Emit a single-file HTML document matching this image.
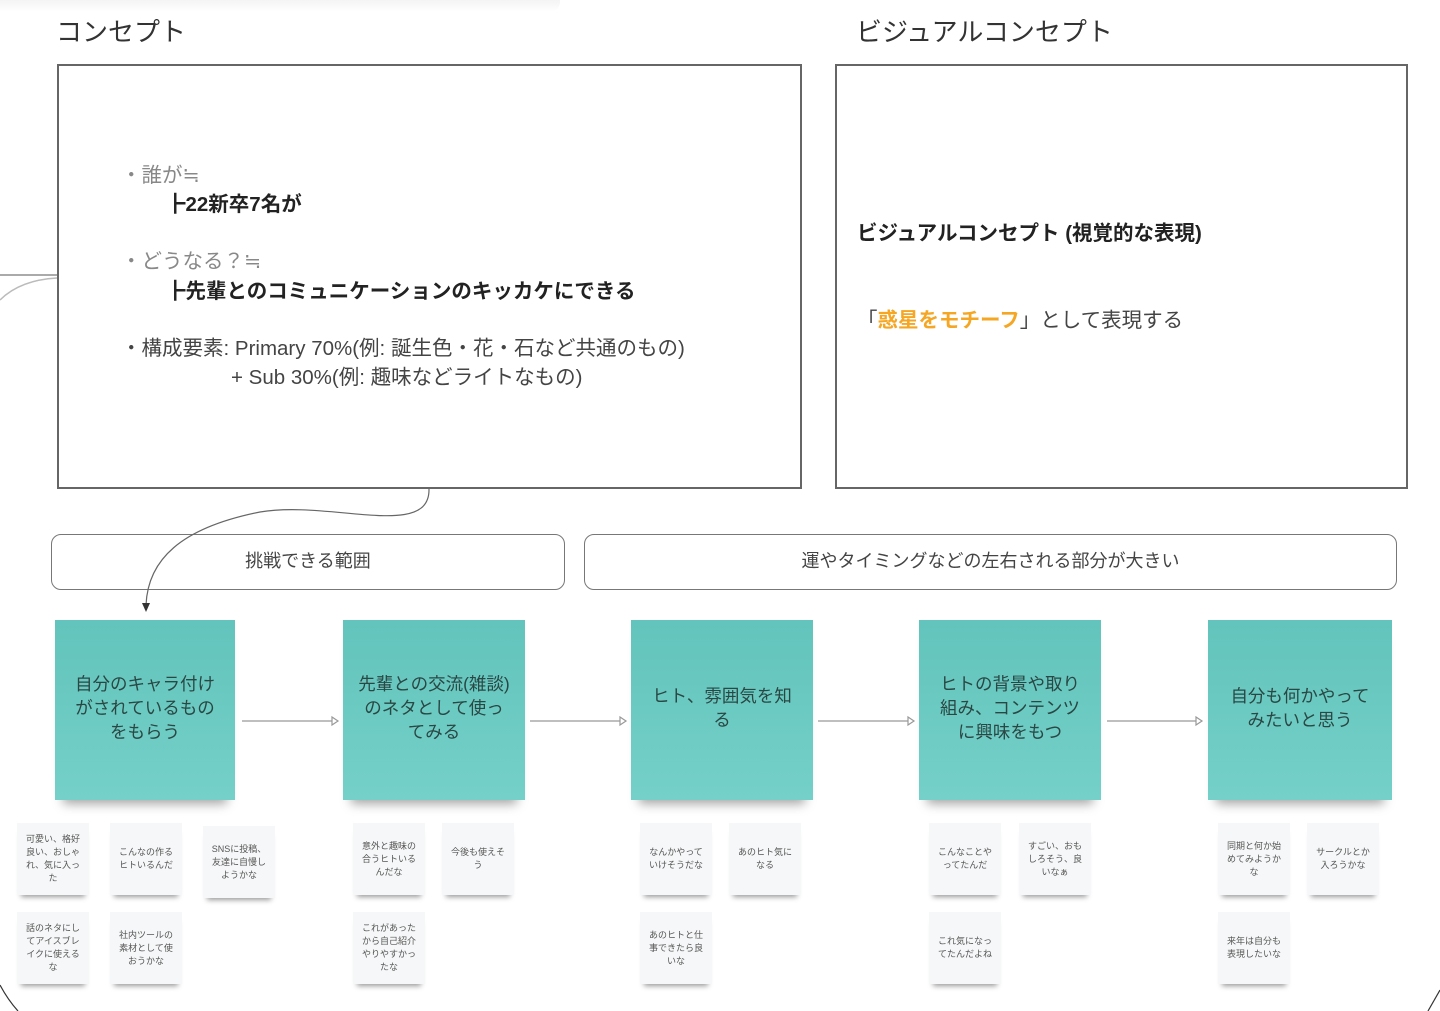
<!DOCTYPE html>
<html><head><meta charset="utf-8"><style>
*{margin:0;padding:0;box-sizing:border-box}
body{width:1440px;height:1011px;background:#fff;position:relative;overflow:hidden;font-family:"Liberation Sans","Noto Sans CJK JP",sans-serif;color:#333}
.a{position:absolute}
.box{position:absolute;border:2px solid #666;background:#fff}
.rb{position:absolute;border:1.5px solid #777;border-radius:10px;background:transparent;display:flex;align-items:center;justify-content:center;font-size:18px;color:#444;padding-bottom:4px}
.st{position:absolute;width:180px;height:180px;background:linear-gradient(#62c4bc,#74d0c8);display:flex;align-items:center;justify-content:center;text-align:center;font-size:17.5px;line-height:24px;color:#2a4744;padding:0 14px 4px;box-shadow:0 12px 10px -8px rgba(0,0,0,.35)}
.n{position:absolute;width:72px;height:72px;background:#f6f7f8;display:flex;align-items:center;justify-content:center;text-align:center;font-size:9px;line-height:13px;color:#555;padding:0 5px;box-shadow:0 6px 5px -4px rgba(0,0,0,.4)}
.t{font-size:20.5px;white-space:nowrap;position:absolute}
</style></head><body>
<div class="a" style="left:0;top:0;width:560px;height:12px;background:linear-gradient(#f4f4f4,#fff);border-radius:0 0 10px 0"></div>
<div class="a" style="left:56px;top:12px;font-size:26px;color:#333">コンセプト</div>
<div class="a" style="left:856px;top:12px;font-size:26px;color:#333">ビジュアルコンセプト</div>
<div class="box" style="left:57px;top:64px;width:745px;height:425px">
<div class="t" style="left:62px;top:92px;color:#888">・誰が≒</div>
<div class="t" style="left:106px;top:121px;font-weight:bold;color:#222">┣22新卒7名が</div>
<div class="t" style="left:62px;top:178px;color:#888">・どうなる？≒</div>
<div class="t" style="left:106px;top:208px;font-weight:bold;color:#222">┣先輩とのコミュニケーションのキッカケにできる</div>
<div class="t" style="left:62px;top:265px;color:#444">・構成要素: Primary 70%(例: 誕生色・花・石など共通のもの)</div>
<div class="t" style="left:172px;top:294px;color:#444">+ Sub 30%(例: 趣味などライトなもの)</div>
</div>
<div class="box" style="left:835px;top:64px;width:573px;height:425px">
<div class="t" style="left:20px;top:150px;font-weight:bold;color:#222">ビジュアルコンセプト (視覚的な表現)</div>
<div class="t" style="left:20px;top:237px;color:#444">「<span style="color:#f5a623;font-weight:bold">惑星をモチーフ</span>」として表現する</div>
</div>
<div class="rb" style="left:51px;top:534px;width:514px;height:56px">挑戦できる範囲</div>
<div class="rb" style="left:584px;top:534px;width:813px;height:56px">運やタイミングなどの左右される部分が大きい</div>
<svg class="a" style="left:0;top:0" width="1440" height="1011">
<path d="M0 275 H57" stroke="#aaa" stroke-width="2" fill="none"/>
<path d="M0 300 Q20 280 57 278" stroke="#bbb" stroke-width="1.5" fill="none"/>
<path d="M429 489 C430 540 330 500 260 512 C180 528 148 560 146 605" stroke="#666" stroke-width="1.2" fill="none"/>
<path d="M142 603 L146 612 L150 603Z" fill="#333"/>
<g stroke="#999" stroke-width="1.2" fill="#fff">
<line x1="242" y1="721" x2="332" y2="721"/><path d="M332 717 L338 721 L332 725Z"/>
<line x1="530" y1="721" x2="620" y2="721"/><path d="M620 717 L626 721 L620 725Z"/>
<line x1="818" y1="721" x2="908" y2="721"/><path d="M908 717 L914 721 L908 725Z"/>
<line x1="1107" y1="721" x2="1196" y2="721"/><path d="M1196 717 L1202 721 L1196 725Z"/>
</g>
<path d="M0 985 Q8 1000 18 1011" stroke="#333" stroke-width="1.2" fill="none"/>
<path d="M1440 990 L1428 1011" stroke="#333" stroke-width="1.2" fill="none"/>
</svg>
<div class="st" style="left:55px;top:620px">自分のキャラ付けがされているものをもらう</div>
<div class="st" style="left:343px;top:620px;width:182px">先輩との交流(雑談)のネタとして使ってみる</div>
<div class="st" style="left:631px;top:620px;width:182px">ヒト、雰囲気を知る</div>
<div class="st" style="left:919px;top:620px;width:182px">ヒトの背景や取り組み、コンテンツに興味をもつ</div>
<div class="st" style="left:1208px;top:620px;width:184px">自分も何かやってみたいと思う</div>
<div class="n" style="left:17px;top:823px">可愛い、格好良い、おしゃれ、気に入った</div>
<div class="n" style="left:110px;top:823px">こんなの作るヒトいるんだ</div>
<div class="n" style="left:203px;top:826px">SNSに投稿、友達に自慢しようかな</div>
<div class="n" style="left:17px;top:912px">話のネタにしてアイスブレイクに使えるな</div>
<div class="n" style="left:110px;top:912px">社内ツールの素材として使おうかな</div>
<div class="n" style="left:353px;top:823px">意外と趣味の合うヒトいるんだな</div>
<div class="n" style="left:442px;top:823px">今後も使えそう</div>
<div class="n" style="left:353px;top:912px">これがあったから自己紹介やりやすかったな</div>
<div class="n" style="left:640px;top:823px">なんかやっていけそうだな</div>
<div class="n" style="left:729px;top:823px">あのヒト気になる</div>
<div class="n" style="left:640px;top:912px">あのヒトと仕事できたら良いな</div>
<div class="n" style="left:929px;top:823px">こんなことやってたんだ</div>
<div class="n" style="left:1019px;top:823px">すごい、おもしろそう、良いなぁ</div>
<div class="n" style="left:929px;top:912px">これ気になってたんだよね</div>
<div class="n" style="left:1218px;top:823px">同期と何か始めてみようかな</div>
<div class="n" style="left:1307px;top:823px">サークルとか入ろうかな</div>
<div class="n" style="left:1218px;top:912px">来年は自分も表現したいな</div>
</body></html>
